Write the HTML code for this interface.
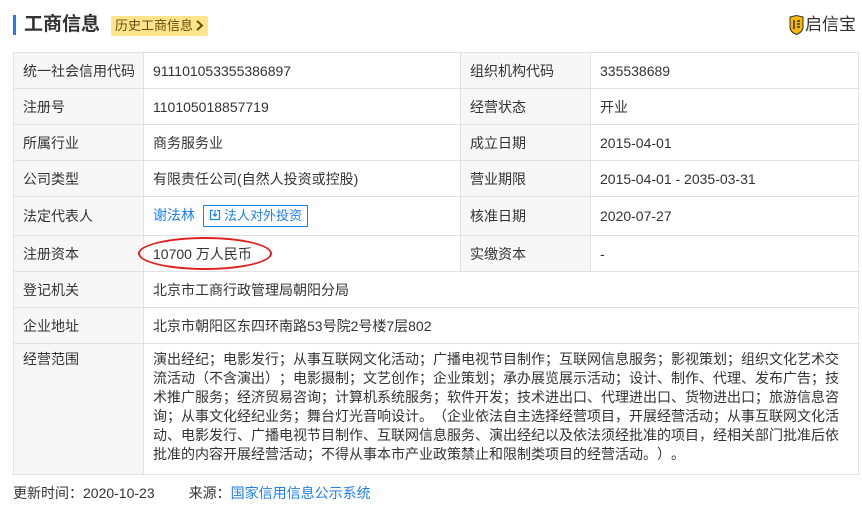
<!DOCTYPE html>
<html><head><meta charset="utf-8"><style>
*{margin:0;padding:0;box-sizing:border-box}
body{width:862px;height:519px;background:#fff;font-family:"Liberation Sans","Noto Sans CJK SC",sans-serif;color:#333;font-size:14px;position:relative;overflow:hidden;text-spacing-trim:space-all;font-feature-settings:"fwid" 0}
.bar{position:absolute;left:13px;top:15px;width:3px;height:20px;background:#1e7ff0}
.title{position:absolute;left:24px;top:12px;font-size:19px;font-weight:bold;color:#333;line-height:26px}
.badge{position:absolute;left:111px;top:16px;height:20px;background:#ffe58a;border-radius:2px;color:#6b4a10;font-size:13px;line-height:20px;padding:0 4px;white-space:nowrap}
.logo{position:absolute;left:789px;top:12px;font-size:17px;line-height:26px;color:#333;white-space:nowrap}
.logo svg{vertical-align:-5px;margin-right:1px}
table{position:absolute;left:13px;top:52px;width:845px;border-collapse:collapse;table-layout:fixed}
td{border:1px solid #e2e2e2;height:36px;padding:0 9px;vertical-align:middle;white-space:nowrap}
td.l{background:#f7f7f7;}
.blue{color:#1e7ff0}
.btn{display:inline-block;border:1px solid #1e7ff0;color:#1e7ff0;height:22px;line-height:20px;padding:0 5px;margin-left:8px;font-size:13px;vertical-align:middle}
.scope{line-height:19px;padding-top:6px;padding-bottom:6px;vertical-align:top}
.foot{position:absolute;left:13px;top:483px;line-height:20px;font-size:14px}
.ell{position:absolute;left:138px;top:237px;width:134px;height:33px;border:2px solid #e0201c;border-radius:50%}
</style></head><body>
<div class="bar"></div>
<div class="title">工商信息</div>
<div class="badge">历史工商信息<svg width="9" height="11" viewBox="0 0 9 11" style="margin-left:2px;vertical-align:-1px"><path d="M2 1 L7 5.5 L2 10" stroke="#6b4a10" stroke-width="2" fill="none"/></svg></div>
<div class="logo"><svg width="15" height="20" viewBox="0 0 15 20"><path d="M1 2 L7.5 0.5 L14 2 L14 12 Q14 17 7.5 19.5 Q1 17 1 12 Z" fill="#f5b800" stroke="#333" stroke-width="1"/><path d="M5 5 L5 14 M8 6 L11 6 M8 9 L11 9 M8 12 L11 12" stroke="#333" stroke-width="1.5" fill="none"/></svg>启信宝</div>
<table>
<colgroup><col style="width:130px"><col style="width:317px"><col style="width:130px"><col style="width:268px"></colgroup>
<tr style="height:35px"><td class="l">统一社会信用代码</td><td>911101053355386897</td><td class="l">组织机构代码</td><td>335538689</td></tr>
<tr><td class="l">注册号</td><td>110105018857719</td><td class="l">经营状态</td><td>开业</td></tr>
<tr><td class="l">所属行业</td><td>商务服务业</td><td class="l">成立日期</td><td>2015-04-01</td></tr>
<tr><td class="l">公司类型</td><td>有限责任公司(自然人投资或控股)</td><td class="l">营业期限</td><td>2015-04-01 - 2035-03-31</td></tr>
<tr style="height:39px"><td class="l">法定代表人</td><td><span class="blue">谢法林</span><span class="btn"><svg width="12" height="12" viewBox="0 0 12 12" style="vertical-align:-1px;margin-right:3px"><path d="M4 1.5 H1.5 V10.5 H10.5 V1.5 H8 M6 1 V7 M3.8 5 L6 7.2 L8.2 5" stroke="#1e7ff0" stroke-width="1.2" fill="none"/></svg>法人对外投资</span></td><td class="l">核准日期</td><td>2020-07-27</td></tr>
<tr><td class="l">注册资本</td><td>10700 万人民币</td><td class="l">实缴资本</td><td>-</td></tr>
<tr><td class="l">登记机关</td><td colspan="3">北京市工商行政管理局朝阳分局</td></tr>
<tr><td class="l">企业地址</td><td colspan="3">北京市朝阳区东四环南路53号院2号楼7层802</td></tr>
<tr style="height:131px"><td class="l scope">经营范围</td><td colspan="3" class="scope">演出经纪；电影发行；从事互联网文化活动；广播电视节目制作；互联网信息服务；影视策划；组织文化艺术交<br>流活动（不含演出）；电影摄制；文艺创作；企业策划；承办展览展示活动；设计、制作、代理、发布广告；技<br>术推广服务；经济贸易咨询；计算机系统服务；软件开发；技术进出口、代理进出口、货物进出口；旅游信息咨<br>询；从事文化经纪业务；舞台灯光音响设计。（企业依法自主选择经营项目，开展经营活动；从事互联网文化活<br>动、电影发行、广播电视节目制作、互联网信息服务、演出经纪以及依法须经批准的项目，经相关部门批准后依<br>批准的内容开展经营活动；不得从事本市产业政策禁止和限制类项目的经营活动。）。</td></tr>
</table>
<div class="ell"></div>
<div class="foot">更新时间：2020-10-23<span style="display:inline-block;width:34px"></span>来源：<span class="blue">国家信用信息公示系统</span></div>
</body></html>
